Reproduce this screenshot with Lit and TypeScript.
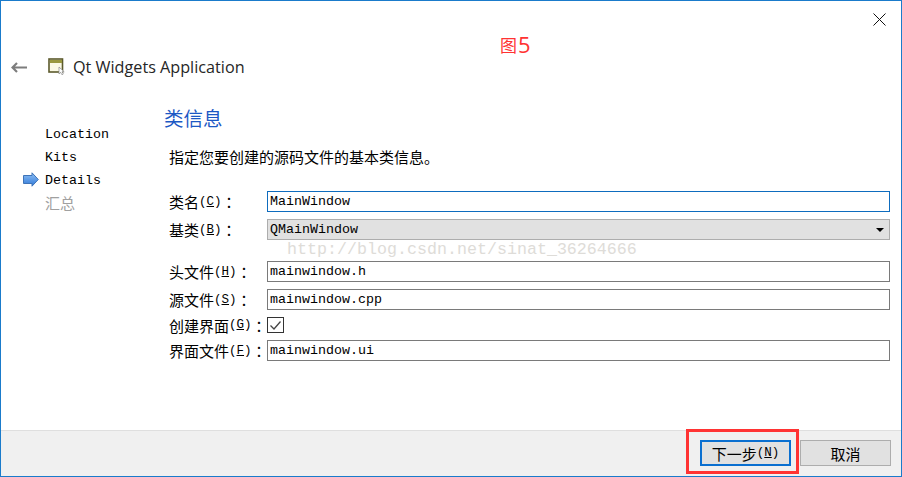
import { LitElement, html, css } from "lit";
import { customElement } from "lit/decorators.js";

@customElement("app-root")
export class AppRoot extends LitElement {
  static styles = css`
    :host { display: block; width: 902px; height: 477px; font-family: "Liberation Mono", "Noto Sans CJK SC", monospace; }
    * { box-sizing: border-box; }
    .win { position: relative; width: 902px; height: 477px; background: #fff; border: 1px solid #1a7bcb; display: flex; flex-direction: column; color: #000; font-size: 13.33px; overflow: hidden; }
    .closebar { height: 23px; padding: 12px 15px 0 0; display: flex; justify-content: flex-end; flex: none; }
    .title { height: 40px; flex: none; margin-top: 23px; display: flex; align-items: center; padding-left: 10px; font: 16.2px "Open Sans", sans-serif; color: #262626; }
    .title .back { margin-right: 21px; }
    .title .ico { margin-right: 6px; }
    .body { flex: 1; display: flex; min-height: 0; }
    .side { width: 163px; flex: none; padding-top: 36px; }
    .step { height: 23px; display: flex; align-items: center; padding-left: 44px; position: relative; }
    .step svg { position: absolute; left: 22px; top: 3px; }
    .step.todo { color: #a0a0a0; margin-top: -1px; }
    .main { flex: 1; padding: 19px 11px 0 0; }
    h2 { margin: 0; font: 400 19.5px/24px "Noto Sans CJK SC", sans-serif; color: #1c58c4; height: 24px; }
    .cn { font-family: "Noto Sans CJK SC", sans-serif; font-size: 15px; }
    .colon { font-family: "Noto Sans CJK TC", sans-serif; font-size: 15px; }
    .intro { margin: 14px 0 0 5px; height: 24px; display: flex; align-items: center; }
    .form { display: grid; grid-template-columns: 98px 1fr; margin: 23px 0 0 5px; row-gap: 7px; align-items: center; }
    .lab { white-space: nowrap; height: 20px; display: flex; align-items: center; font-size: 12.5px; }
    .lab.short { height: 16px; }
    .lab u { text-underline-offset: 1px; }
    .field { height: 21px; border: 1px solid #7a7a7a; display: flex; align-items: center; padding-left: 2px; background: #fff; }
    .field.focus { border-color: #0e6cbe; }
    .combo { background: #e1e1e1; border: 1px solid #adadad; justify-content: space-between; padding-right: 3px; }
    .combo i { width: 0; height: 0; border: 4px solid transparent; border-top: 4px solid #000; border-bottom: 0; margin-right: 2px; }
    .check { width: 17px; height: 16px; border: 1px solid #333; display: flex; align-items: center; justify-content: center; }
    .gap { margin-top: 14px; }
    .foot { height: 46px; flex: none; background: #f0f0f0; border-top: 1px solid #dfdfdf; display: flex; justify-content: flex-end; align-items: center; gap: 9px; padding: 0 10px 1px 0; }
    button { width: 91px; height: 26px; margin: 0; padding: 0; background: #e1e1e1; border: 1px solid #adadad; font: inherit; font-size: 12.5px; color: #000; display: flex; align-items: center; justify-content: center; }
    button.def { border: 2px solid #0a6fd0; }
    .mark { position: absolute; left: 286px; top: 239px; font: 16.67px "Liberation Mono", monospace; color: #dedcd8; white-space: nowrap; pointer-events: none; }
    .note { position: absolute; left: 499px; top: 30px; color: #ff3333; display: flex; align-items: center; height: 26px; white-space: nowrap; }
    .note b { font: 400 17px "Noto Sans CJK SC", sans-serif; }
    .note span { font: 22px "Open Sans", sans-serif; margin-left: 1px; }
    .redbox { position: absolute; left: 685px; top: 428px; width: 113px; height: 45px; border: 3px solid #ff3333; pointer-events: none; }
  `;

  render() {
    const colon = html`<span class="colon">：</span>`;
    return html`
      <div class="win">
        <div class="closebar">
          <svg width="13" height="13" viewBox="0 0 13 13"><path d="M.5.5l12 12M12.5.5l-12 12" stroke="#111" fill="none"/></svg>
        </div>
        <div class="title">
          <svg class="back" width="16" height="11" viewBox="0 0 16 11"><path d="M6 1L1.5 5.5 6 10M2 5.5H16" stroke="#7d7d7d" stroke-width="2.2" fill="none"/></svg>
          <svg class="ico" width="19" height="18" viewBox="0 0 19 18">
            <rect x="1" y="1" width="13.5" height="13" fill="#fbf9e4" stroke="#5c5a2c" stroke-width="1.6"/>
            <rect x="2" y="2" width="12" height="3" fill="#9a983f"/>
            <path d="M11 9l0 7 1.6-1.6 1.4 2.4 1.3-.8-1.3-2.2 2.2 0z" fill="#fff" stroke="#888" stroke-width=".7"/>
          </svg>
          <span>Qt Widgets Application</span>
        </div>
        <div class="body">
          <div class="side">
            <div class="step">Location</div>
            <div class="step">Kits</div>
            <div class="step">
              <svg width="16" height="15" viewBox="0 0 16 15"><defs><linearGradient id="g" x1="0" x2="0" y1="0" y2="1"><stop offset="0" stop-color="#8fc0f4"/><stop offset="1" stop-color="#2f78d8"/></linearGradient></defs><path d="M.5 3.5h8.5V.8L15.3 7.5 9 14.2v-2.7H.5z" fill="url(#g)" stroke="#3f74b8"/></svg>
              Details
            </div>
            <div class="step todo"><span class="cn">汇总</span></div>
          </div>
          <div class="main">
            <h2>类信息</h2>
            <div class="intro cn">指定您要创建的源码文件的基本类信息。</div>
            <div class="form">
              <div class="lab"><span class="cn">类名</span>(<u>C</u>)${colon}</div>
              <div class="field focus">MainWindow</div>
              <div class="lab"><span class="cn">基类</span>(<u>B</u>)${colon}</div>
              <div class="field combo">QMainWindow<i></i></div>
              <div class="lab gap"><span class="cn">头文件</span>(<u>H</u>)${colon}</div>
              <div class="field gap">mainwindow.h</div>
              <div class="lab"><span class="cn">源文件</span>(<u>S</u>)${colon}</div>
              <div class="field">mainwindow.cpp</div>
              <div class="lab short"><span class="cn">创建界面</span>(<u>G</u>)${colon}</div>
              <div class="check"><svg width="13" height="11" viewBox="0 0 13 11"><path d="M1.5 5.5L5 9l6.5-7.5" stroke="#444" stroke-width="1.3" fill="none"/></svg></div>
              <div class="lab"><span class="cn">界面文件</span>(<u>F</u>)${colon}</div>
              <div class="field">mainwindow.ui</div>
            </div>
          </div>
        </div>
        <div class="foot">
          <button class="def"><span class="cn">下一步</span>(<u>N</u>)</button>
          <button><span class="cn">取消</span></button>
        </div>
        <div class="mark">http://blog.csdn.net/sinat_36264666</div>
        <div class="note"><b>图</b><span>5</span></div>
        <div class="redbox"></div>
      </div>
    `;
  }
}
